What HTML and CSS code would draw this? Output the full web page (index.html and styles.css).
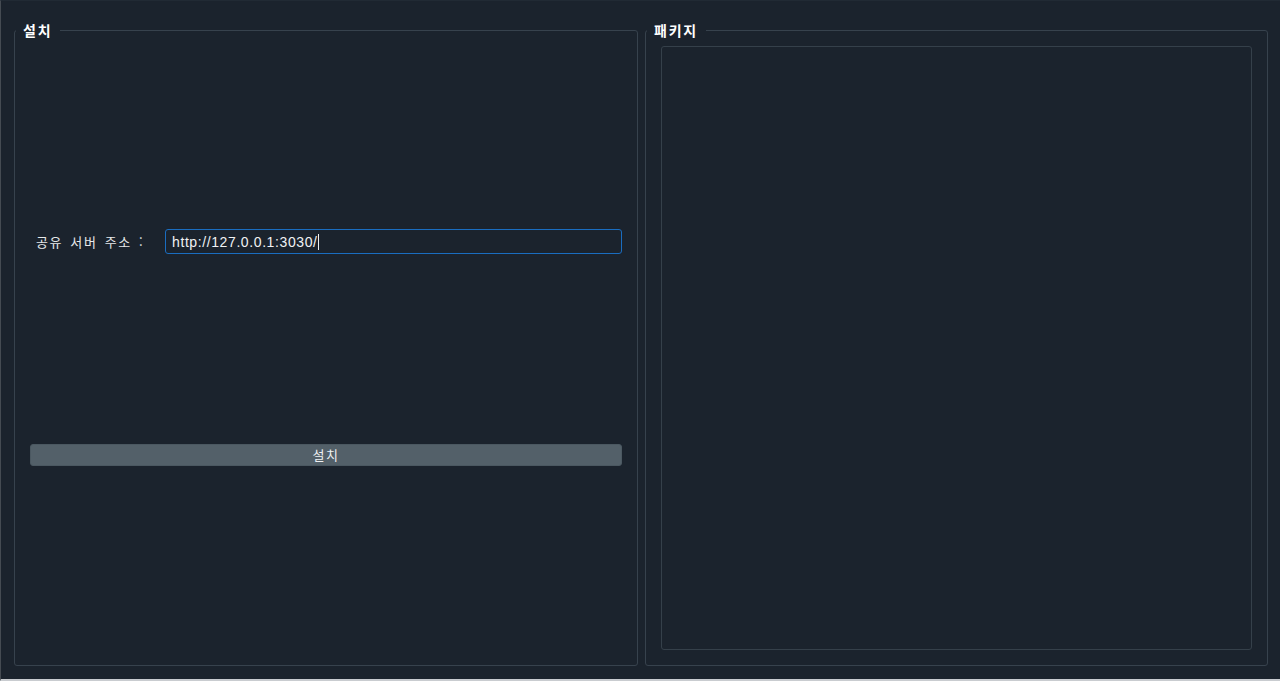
FILE: index.html
```html
<!DOCTYPE html>
<html lang="ko">
<head>
<meta charset="utf-8">
<title>설치</title>
<link rel="stylesheet" href="styles.css">
</head>
<body>
<div class="window">
  <fieldset class="group group-install">
    <legend class="group-title">설치</legend>
    <div class="install-body">
      <div class="form-row">
        <label class="form-label">공유 서버 주소 :</label>
        <div class="field"><span class="field-text">http://127.0.0.1:3030/</span><span class="caret"></span></div>
      </div>
      <button class="btn" type="button">설치</button>
    </div>
  </fieldset>
  <fieldset class="group group-packages">
    <legend class="group-title">패키지</legend>
    <div class="package-list"></div>
  </fieldset>
</div>
</body>
</html>
```

FILE: styles.css
```css
* { box-sizing: border-box; }
html, body {
  margin: 0;
  padding: 0;
  background: #1b232d;
}
body {
  width: 1280px;
  height: 681px;
  overflow: hidden;
  font-family: "Noto Sans CJK KR", "Liberation Sans", sans-serif;
  color: #e8eaec;
}
.window {
  width: 1280px;
  height: 681px;
  display: flex;
  gap: 7px;
  padding: 20px 12px 0 13px;
  border-left: 1px solid #454b52;
  border-top: 1px solid #212a34;
  border-bottom: 2px solid #c9ccd0;
}
.group {
  margin: 0;
  padding: 0;
  height: 645px;
  border: 1px solid #37424d;
  border-radius: 3px;
  min-width: 0;
}
.group-install { width: 624px; }
.group-packages { width: 623px; }
.group-title {
  margin-left: 1px;
  padding: 0 8px 0 7px;
  height: 18px;
  line-height: 18px;
  font-size: 14px;
  font-weight: bold;
  letter-spacing: 1.8px;
  color: #ffffff;
}
.install-body {
  display: flex;
  flex-direction: column;
  padding: 190px 15px 0 15px;
}
.form-row {
  display: flex;
  align-items: center;
  height: 25px;
}
.form-label {
  width: 135px;
  padding-left: 6px;
  font-size: 13px;
  letter-spacing: 1.6px;
  word-spacing: 2px;
  color: #e6e8ea;
}
.field {
  flex: 1;
  height: 25px;
  display: flex;
  align-items: center;
  padding-left: 6px;
  border: 1px solid #1a6dc0;
  border-radius: 3px;
  background: #1b232d;
  font-family: "Liberation Sans", "Noto Sans CJK KR", sans-serif;
  font-size: 14px;
  letter-spacing: 0.6px;
  color: #f0f2f4;
}
.caret {
  width: 1px;
  height: 16px;
  background: #f0f2f4;
}
.btn {
  margin-top: 190px;
  height: 22px;
  border: 1px solid #4b5861;
  border-radius: 3px;
  background: #536069;
  color: #eef0f2;
  font-family: "Noto Sans CJK KR", sans-serif;
  font-size: 13px;
  letter-spacing: 1.5px;
  line-height: 18px;
  padding: 0;
}
.package-list {
  margin: 7px 15px 0 15px;
  height: 604px;
  border: 1px solid #35404a;
  border-radius: 3px;
}
```
